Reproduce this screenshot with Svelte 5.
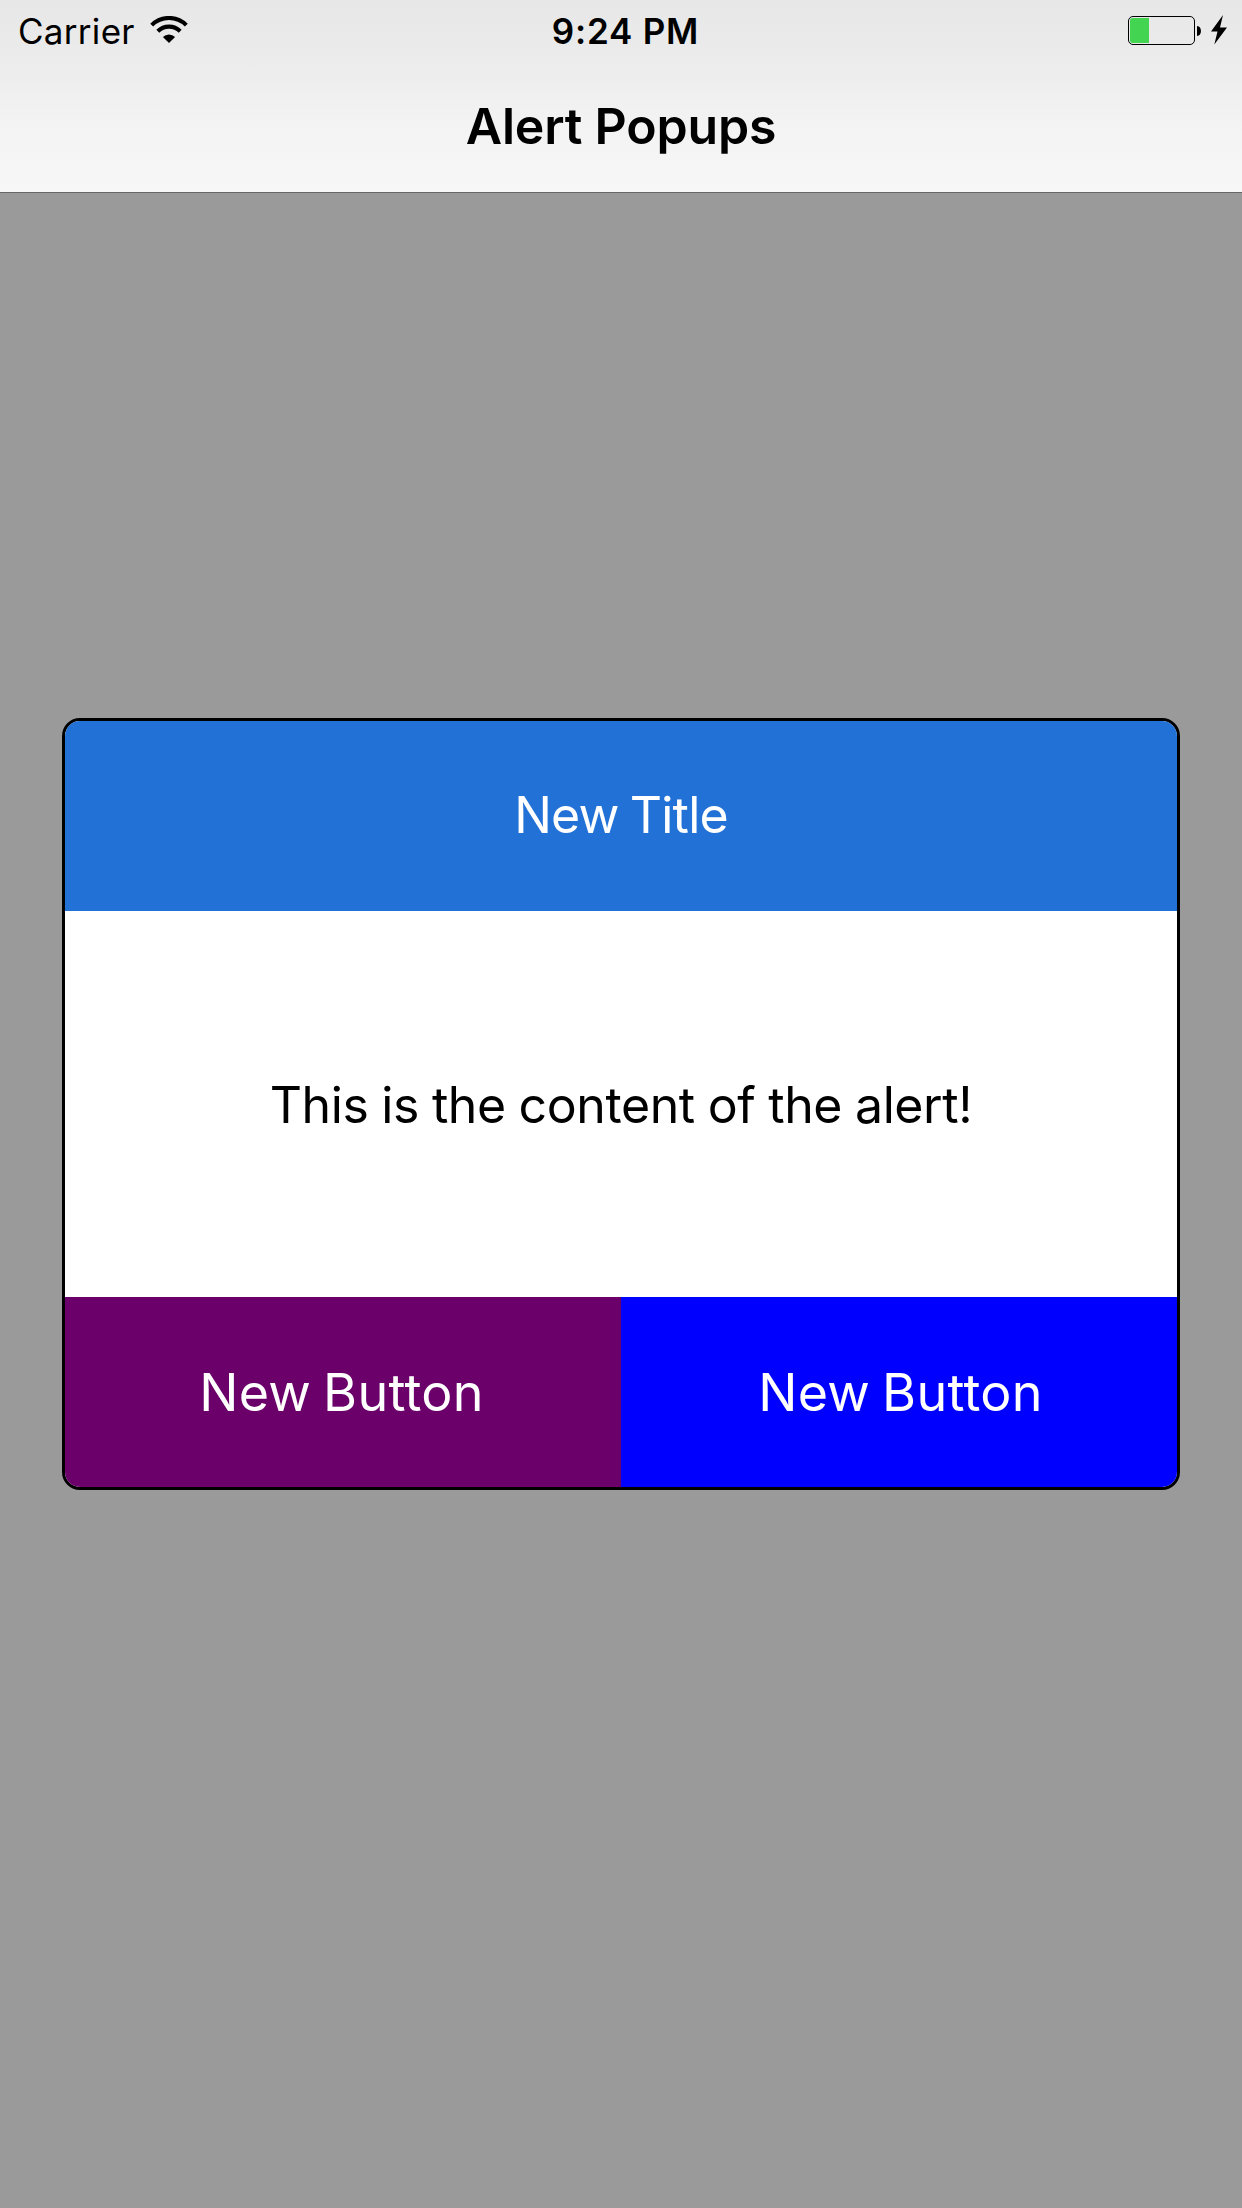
<script>
  const buttons = [
    { label: 'New Button', tone: 'purple' },
    { label: 'New Button', tone: 'blue' }
  ];
</script>

<div class="screen">
  <header class="navbar">
    <div class="status">
      <div class="network">
        <span class="carrier">Carrier</span>
        <svg class="wifi" width="38" height="28" viewBox="0 0 38 28" aria-hidden="true">
          <g fill="none" stroke="#000" stroke-width="4.1">
            <path d="M1.7 9.1 A24.5 24.5 0 0 1 36.3 9.1" />
            <path d="M7.8 15.2 A15.9 15.9 0 0 1 30.2 15.2" />
          </g>
          <path d="M19 27 L12.9 21 A8.7 8.7 0 0 1 25.1 21 Z" />
        </svg>
      </div>
      <span class="time">9:24 PM</span>
      <svg class="power" width="100" height="30" viewBox="0 0 100 30" aria-hidden="true">
        <rect x="0.5" y="1.5" width="66" height="28" rx="4.5" fill="none" stroke="#000" />
        <path d="M4.5 3 H21 V28 H4.5 A2.5 2.5 0 0 1 2 25.5 V5.5 A2.5 2.5 0 0 1 4.5 3 Z" fill="#43d551" />
        <path d="M69 11 C74.3 11 74.3 21 69 21 Z" />
        <path d="M95 0 L83 16.5 H89.5 L86.3 29.5 L99 12.5 H92 Z" />
      </svg>
    </div>
    <h1>Alert Popups</h1>
  </header>

  <main class="backdrop">
    <section class="alert">
      <h2>New Title</h2>
      <p>This is the content of the alert!</p>
      <div class="actions">
        {#each buttons as button}
          <button class={button.tone}><span>{button.label}</span></button>
        {/each}
      </div>
    </section>
  </main>
</div>

<style>
  .screen {
    display: flex;
    flex-direction: column;
    width: 1242px;
    height: 2208px;
    overflow: hidden;
    font-family: Inter, 'Liberation Sans', sans-serif;
    color: #000;
  }

  .navbar {
    display: flex;
    flex-direction: column;
    box-sizing: border-box;
    height: 193px;
    border-bottom: 1px solid #666;
    background: linear-gradient(#e7e7e7, #ebebeb 28%, #f3f3f3 65%, #f7f7f7);
  }

  .status {
    display: grid;
    grid-template-columns: 1fr auto 1fr;
    align-items: center;
    height: 60px;
    padding: 0 14px 0 18px;
    font-size: 35px;
    line-height: 62px;
  }

  .network {
    display: flex;
    align-items: center;
    gap: 15px;
  }

  .carrier {
    letter-spacing: 0.3px;
  }

  .wifi,
  .power {
    margin-bottom: 2px;
  }

  .time {
    padding-left: 5px;
    font-weight: 600;
    letter-spacing: 0.8px;
  }

  .power {
    justify-self: end;
  }

  h1,
  h2,
  p {
    margin: 0;
    font-weight: 400;
    font-size: 50px;
    text-align: center;
  }

  h1 {
    line-height: 132px;
    font-weight: 600;
    letter-spacing: -0.2px;
  }

  .backdrop {
    flex: 1;
    padding: 525px 62px 0;
    background: #9a9a9a;
  }

  .alert {
    display: grid;
    grid-template-rows: 190px 386px 190px;
    border: 3px solid #000;
    border-radius: 18px;
    overflow: hidden;
    background: #fff;
  }

  h2 {
    background: #2271d7;
    color: #fff;
    line-height: 188px;
    letter-spacing: -0.8px;
    word-spacing: -2px;
  }

  p {
    line-height: 388px;
    letter-spacing: -0.4px;
    word-spacing: -0.8px;
  }

  .actions {
    display: grid;
    grid-template-columns: 1fr 1fr;
  }

  button {
    border: 0;
    padding: 0;
    color: #fff;
    font: 400 52px/192px Inter, 'Liberation Sans', sans-serif;
    letter-spacing: 0.3px;
    word-spacing: -3px;
  }

  .purple {
    padding-right: 3px;
    background: #6b006b;
  }

  .blue {
    padding-left: 3px;
    background: #00f;
  }
</style>
